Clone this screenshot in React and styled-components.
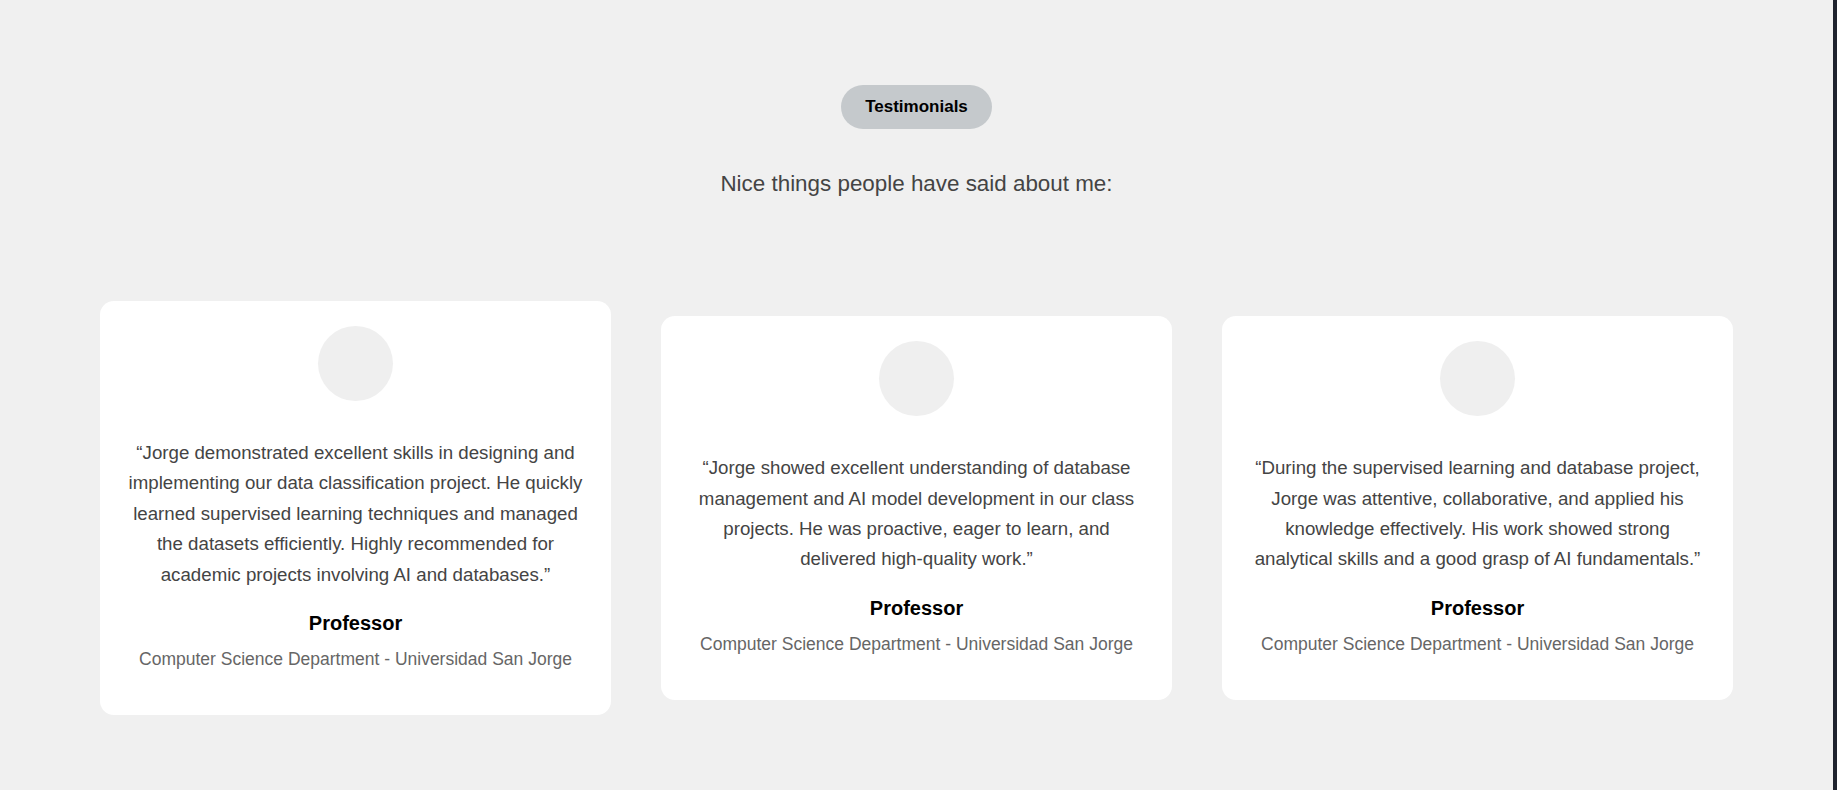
import React from 'react';
import styled, { createGlobalStyle } from 'styled-components';

const GlobalStyle = createGlobalStyle`
  body {
    margin: 0;
    background: #f0f0f0;
    font-family: 'Liberation Sans', Arial, sans-serif;
  }
`;

const Page = styled.div`
  display: flex;
  min-height: 100vh;
`;
const Main = styled.section`
  flex: 1;
  display: flex;
  flex-direction: column;
  align-items: center;
  padding: 85px 100px 60px;
`;
const EdgeBar = styled.aside`
  width: 4px;
  background: #1f232e;
`;
const Badge = styled.span`
  display: inline-block;
  background: #c5c9cc;
  color: #000;
  font-size: 17px;
  font-weight: 700;
  padding: 12px 24px;
  border-radius: 999px;
`;
const Subtitle = styled.p`
  margin: 42px 0 0;
  font-size: 22.4px;
  color: #444;
`;
const Cards = styled.div`
  margin-top: 104px;
  width: 100%;
  display: flex;
  align-items: center;
  gap: 50px;
`;
const Card = styled.article`
  flex: 1;
  background: #fff;
  border-radius: 14px;
  padding: 25px 24px 46px;
  display: flex;
  flex-direction: column;
  align-items: center;
  text-align: center;
`;
const Avatar = styled.div`
  width: 75px;
  height: 75px;
  border-radius: 50%;
  background: #efefef;
  margin-bottom: 37px;
`;
const Quote = styled.p`
  margin: 0;
  font-size: 18.7px;
  line-height: 30.4px;
  color: #444;
`;
const Name = styled.h4`
  margin: 22px 0 0;
  font-size: 20px;
  line-height: 23px;
  color: #000;
`;
const Role = styled.p`
  margin: 14px 0 0;
  font-size: 17.5px;
  line-height: 20px;
  color: #666;
`;

const testimonials = [
  {
    quote:
      '“Jorge demonstrated excellent skills in designing and implementing our data classification project. He quickly learned supervised learning techniques and managed the datasets efficiently. Highly recommended for academic projects involving AI and databases.”',
  },
  {
    quote:
      '“Jorge showed excellent understanding of database management and AI model development in our class projects. He was proactive, eager to learn, and delivered high-quality work.”',
  },
  {
    quote:
      '“During the supervised learning and database project, Jorge was attentive, collaborative, and applied his knowledge effectively. His work showed strong analytical skills and a good grasp of AI fundamentals.”',
  },
];

export default function App() {
  return (
    <Page>
      <GlobalStyle />
      <Main>
        <Badge>Testimonials</Badge>
        <Subtitle>Nice things people have said about me:</Subtitle>
        <Cards>
          {testimonials.map((t, i) => (
            <Card key={i}>
              <Avatar />
              <Quote>{t.quote}</Quote>
              <Name>Professor</Name>
              <Role>Computer Science Department - Universidad San Jorge</Role>
            </Card>
          ))}
        </Cards>
      </Main>
      <EdgeBar />
    </Page>
  );
}
